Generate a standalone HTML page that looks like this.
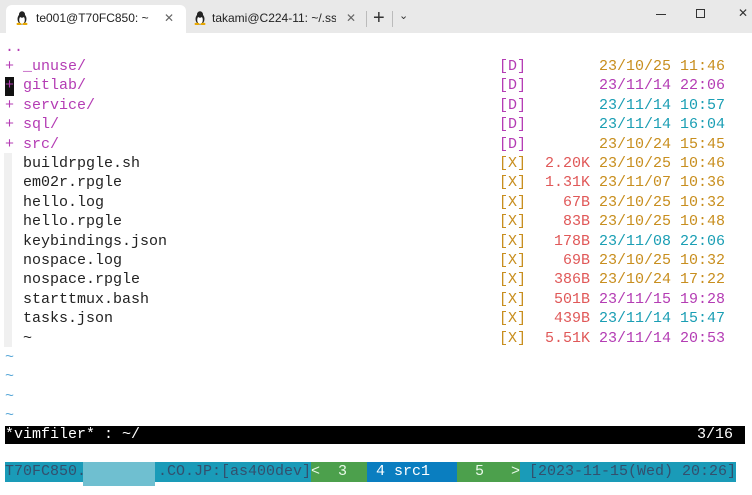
<!DOCTYPE html>
<html><head><meta charset="utf-8"><style>
*{margin:0;padding:0;box-sizing:border-box}
body{width:752px;height:495px;background:#fff;position:relative;overflow:hidden;font-family:"Liberation Mono",monospace;font-size:15px}
.tb{position:absolute;left:0;top:0;width:752px;height:33px;background:#e9e9e9}
.tab{position:absolute;top:5px;height:28px;font-family:"Liberation Sans",sans-serif;font-size:12px;color:#222;line-height:26px}
.t1{left:6px;width:180px;background:#fff;border-radius:6px 6px 0 0}
.t2{left:188px;width:180px}
.x{position:absolute;right:12px;top:0;font-size:12px;color:#666}
.r{position:absolute;height:19.4px;line-height:19.4px;white-space:pre}
.m{color:#b43cb4}.o{color:#c88e1e}.c{color:#1a9eb4}.e{color:#e05858}.k{color:#222}.t{color:#5aa8d8}
.g{position:absolute;left:4px;top:153px;width:8px;height:194px;background:#f0f0f0}
</style></head><body>
<div class="tb">
<div class="tab t1"><svg style="position:absolute;left:10px;top:6px" width="12" height="14" viewBox="0 0 12 14"><ellipse cx="6" cy="8" rx="4.5" ry="5.5" fill="#222"/><ellipse cx="6" cy="9" rx="2.8" ry="4" fill="#fff"/><ellipse cx="6" cy="3.5" rx="3" ry="3.2" fill="#222"/><ellipse cx="3" cy="13" rx="2.5" ry="1.2" fill="#e8a800"/><ellipse cx="9" cy="13" rx="2.5" ry="1.2" fill="#e8a800"/></svg><span style="position:absolute;left:30px">te001@T70FC850: ~</span><span class="x">✕</span></div>
<div class="tab t2"><svg style="position:absolute;left:6px;top:6px" width="12" height="14" viewBox="0 0 12 14"><ellipse cx="6" cy="8" rx="4.5" ry="5.5" fill="#222"/><ellipse cx="6" cy="9" rx="2.8" ry="4" fill="#fff"/><ellipse cx="6" cy="3.5" rx="3" ry="3.2" fill="#222"/><ellipse cx="3" cy="13" rx="2.5" ry="1.2" fill="#e8a800"/><ellipse cx="9" cy="13" rx="2.5" ry="1.2" fill="#e8a800"/></svg><span style="position:absolute;left:24px;width:124px;overflow:hidden;white-space:nowrap">takami@C224-11: ~/.ssh</span><span class="x">✕</span></div>
<div style="position:absolute;left:366px;top:11px;width:1px;height:16px;background:#bbb"></div>
<div style="position:absolute;left:373px;top:7px;font-family:'Liberation Sans';font-size:20px;color:#333">+</div>
<div style="position:absolute;left:392px;top:11px;width:1px;height:16px;background:#bbb"></div>
<div style="position:absolute;left:399px;top:9px;font-family:'Liberation Sans';font-size:11px;color:#333">⌄</div>
<div style="position:absolute;left:656px;top:14px;width:10px;height:1px;background:#333"></div>
<div style="position:absolute;left:696px;top:9px;width:9px;height:9px;border:1px solid #333"></div>
<div style="position:absolute;left:738px;top:6px;font-family:'Liberation Sans';font-size:12px;color:#333">✕</div>
</div>
<div class="g"></div>
<div id="c"></div>
<div style="position:absolute;left:5px;top:426px;width:740px;height:18px;background:#000;color:#fff;line-height:18px;white-space:pre">*vimfiler* : ~/<span style="position:absolute;right:12px">3/16</span></div>
<div style="position:absolute;left:5px;top:462px;width:731px;height:20px;background:#1a9bb8;color:#33506e;line-height:20px;white-space:pre">T70FC850.        .CO.JP:[as400dev]<span style="position:absolute;left:306px;width:56px;height:20px;background:#4ca04c;color:#e8f8e8">&lt;  3</span><span style="position:absolute;left:362px;width:90px;height:20px;background:#0a7ec0;color:#fff"> 4 src1</span><span style="position:absolute;left:452px;width:63px;height:20px;background:#4ca04c;color:#e8f8e8">  5   &gt;</span><span style="position:absolute;left:515px"> [2023-11-15(Wed) 20:26]</span></div>
<div style="position:absolute;left:83px;top:462px;width:72px;height:24px;background:#6fbfd0"></div>
<script>
var rows=[
["m","..","","","",""],
["m","+ _unuse/","[D]","","o","23/10/25 11:46"],
["m","+ gitlab/","[D]","","m","23/11/14 22:06"],
["m","+ service/","[D]","","c","23/11/14 10:57"],
["m","+ sql/","[D]","","c","23/11/14 16:04"],
["m","+ src/","[D]","","o","23/10/24 15:45"],
["k","  buildrpgle.sh","[X]","2.20K","o","23/10/25 10:46"],
["k","  em02r.rpgle","[X]","1.31K","o","23/11/07 10:36"],
["k","  hello.log","[X]","67B","o","23/10/25 10:32"],
["k","  hello.rpgle","[X]","83B","o","23/10/25 10:48"],
["k","  keybindings.json","[X]","178B","c","23/11/08 22:06"],
["k","  nospace.log","[X]","69B","o","23/10/25 10:32"],
["k","  nospace.rpgle","[X]","386B","o","23/10/24 17:22"],
["k","  starttmux.bash","[X]","501B","m","23/11/15 19:28"],
["k","  tasks.json","[X]","439B","c","23/11/14 15:47"],
["k","  ~","[X]","5.51K","m","23/11/14 20:53"]];
var h="";
rows.forEach(function(r,i){var y=37.5+i*19.4;
h+='<div class="r '+r[0]+'" style="left:5px;top:'+y+'px">'+r[1]+'</div>';
if(r[2])h+='<div class="r '+(r[2]=="[D]"?"m":"o")+'" style="left:499px;top:'+y+'px">'+r[2]+'</div>';
if(r[3])h+='<div class="r e" style="right:162px;top:'+y+'px">'+r[3]+'</div>';
if(r[5])h+='<div class="r '+r[4]+'" style="left:599px;top:'+y+'px">'+r[5]+'</div>';});
for(var i=16;i<20;i++)h+='<div class="r t" style="left:5px;top:'+(37.5+i*19.4)+'px">~</div>';
h+='<div style="position:absolute;left:5px;top:77px;width:9px;height:19px;background:#111"></div><div class="r m" style="left:5px;top:76.3px">+</div>';
document.getElementById("c").innerHTML=h;
</script>
</body></html>
